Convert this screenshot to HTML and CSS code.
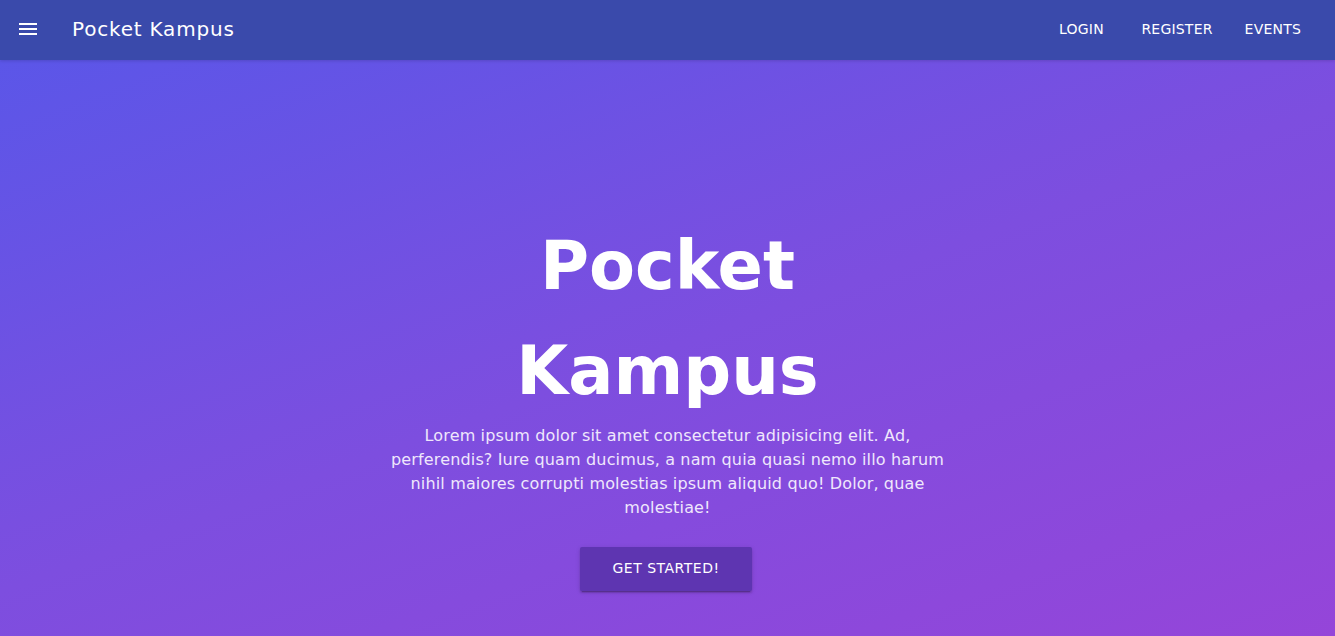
FILE: index.html
```html
<!DOCTYPE html>
<html lang="en">
<head>
<meta charset="utf-8">
<title>Pocket Kampus</title>
<link rel="stylesheet" href="styles.css">
</head>
<body>
<header class="toolbar">
  <button class="menu-btn" aria-label="menu">
    <svg width="24" height="24" viewBox="0 0 24 24"><path d="M3 6h18v2H3zM3 11h18v2H3zM3 16h18v2H3z" fill="#fff"/></svg>
  </button>
  <div class="brand">Pocket Kampus</div>
  <nav class="nav">
    <a class="nav-link" href="#">Login</a>
    <a class="nav-link" href="#">Register</a>
    <a class="nav-link" href="#">Events</a>
  </nav>
</header>
<main class="hero">
  <h1 class="hero-title">Pocket<br>Kampus</h1>
  <p class="hero-text">Lorem ipsum dolor sit amet consectetur adipisicing elit. Ad, perferendis? Iure quam ducimus, a nam quia quasi nemo illo harum nihil maiores corrupti molestias ipsum aliquid quo! Dolor, quae molestiae!</p>
  <a class="cta" href="#">Get Started!</a>
</main>
</body>
</html>
```
FILE: styles.css
```css
* { box-sizing: border-box; }
html, body { margin: 0; padding: 0; height: 100%; overflow: hidden; }
body {
  font-family: "DejaVu Sans", "Liberation Sans", sans-serif;
  color: #fff;
  background: #8a4bdc;
}
.toolbar {
  height: 60px;
  background: #3a4aab;
  display: flex;
  align-items: center;
  padding: 0 18px 2px 16px;
  box-shadow: 0 1px 3px rgba(0,0,0,0.15);
  position: relative;
  z-index: 1;
}
.menu-btn {
  background: none;
  border: 0;
  padding: 0;
  width: 24px;
  height: 24px;
  display: flex;
  cursor: pointer;
}
.brand {
  margin-left: 32px;
  font-size: 20px;
  letter-spacing: 0.8px;
}
.nav { margin-left: auto; display: flex; }
.nav-link {
  min-width: 88px;
  height: 36px;
  display: inline-flex;
  align-items: center;
  justify-content: center;
  color: #fff;
  text-decoration: none;
  text-transform: uppercase;
  font-size: 14px;
  padding: 0 16px;
  letter-spacing: 0.2px;
}
.hero {
  height: calc(100% - 60px);
  background: linear-gradient(160deg, #5b56e8 0%, #7d4edf 50%, #9545d9 100%);
  display: flex;
  flex-direction: column;
  align-items: center;
  padding-top: 154px;
}
.hero-title {
  margin: 0;
  font-size: 67px;
  line-height: 105px;
  font-weight: 700;
  text-align: center;
}
.hero-text {
  margin: 0;
  max-width: 580px;
  text-align: center;
  font-size: 16px;
  letter-spacing: 0.15px;
  line-height: 24px;
  color: #efe7fc;
}
.cta {
  margin-top: 27px;
  margin-right: 3px;
  width: 172px;
  height: 44px;
  display: flex;
  align-items: center;
  justify-content: center;
  padding-bottom: 2px;
  background: #5e35b1;
  color: #fff;
  text-decoration: none;
  text-transform: uppercase;
  font-size: 14px;
  letter-spacing: 0.5px;
  border-radius: 2px;
  box-shadow: 0 3px 1px -2px rgba(0,0,0,.2), 0 2px 2px 0 rgba(0,0,0,.14), 0 1px 5px 0 rgba(0,0,0,.12);
}
```
